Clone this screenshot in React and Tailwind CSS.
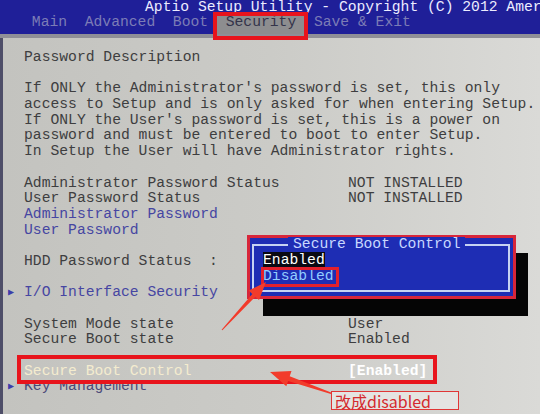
import React from 'react';

const rows = [
  { text: 'Password Description' },
  {},
  { text: "If ONLY the Administrator's password is set, this only" },
  { text: 'access to Setup and is only asked for when entering Setup.' },
  { text: "If ONLY the User's password is set, this is a power on" },
  { text: 'password and must be entered to boot to enter Setup.' },
  { text: 'In Setup the User will have Administrator rights.' },
  {},
  { text: 'Administrator Password Status', value: 'NOT INSTALLED' },
  { text: 'User Password Status', value: 'NOT INSTALLED' },
  { text: 'Administrator Password', link: true },
  { text: 'User Password', link: true },
  {},
  { text: 'HDD Password Status  :' },
  {},
  { text: 'I/O Interface Security', link: true, sub: true },
  {},
  { text: 'System Mode state', value: 'User' },
  { text: 'Secure Boot state', value: 'Enabled' },
  {},
  { text: 'Secure Boot Control', value: '[Enabled]', active: true },
  { text: 'Key Management', link: true, sub: true, dim: true },
];

function Row({ row }) {
  let color = 'text-[#3e3e40]';
  if (row.link) color = 'text-[#4646a2]';
  if (row.dim) color = 'text-[#4a4a78]';
  if (row.active) color = 'text-[#f4eccf]';

  return (
    <div className="flex h-[15.7px] leading-[15.7px] whitespace-pre">
      <span className="w-[21px] shrink-0 pl-[5px] text-[10px] text-[#3c3caa]">{row.sub ? '▶' : ''}</span>
      <span className={`w-[324px] shrink-0 ${color}`}>{row.text || ''}</span>
      {row.value && (
        <span className={row.active ? 'font-bold text-white' : 'text-[#3e3e40]'}>{row.value}</span>
      )}
    </div>
  );
}

function Arrows() {
  return (
    <svg className="absolute inset-0 pointer-events-none" width="540" height="414" viewBox="0 0 540 414">
      <polygon
        fill="#f23b2b"
        points="221.6,329.7 252.3,294.0 248.6,290.6 266,282 259.0,300.0 255.3,296.7 222.4,330.3"
      />
      <polygon
        fill="#f23b2b"
        points="335.8,395.6 288.1,381.0 286.3,386.2 270,372 291.5,371.0 289.7,376.2 336.2,394.4"
      />
    </svg>
  );
}

function Popup() {
  return (
    <div className="absolute left-[247px] top-[235px]">
      {/* drop shadow */}
      <div className="absolute left-[16px] top-[18px] w-[265px] h-[63px] bg-[#050505]" />
      <div className="relative w-[269px] h-[64px] bg-[#1e2db4] border-[3px] border-[#d8263a] pl-[2px] pr-[3px] pt-[6px] pb-[4px]">
        <div className="relative h-full border-2 border-[#c6d2f2] pl-[9px] pt-[6px] leading-[16px]">
          <span className="absolute left-[34px] top-[-9px] px-[5px] leading-[15px] bg-[#1e2db4] whitespace-pre text-[#c8d8ff]">
            Secure Boot Control
          </span>
          <div>
            <span className="bg-[#0a0a14] text-white">Enabled</span>
          </div>
          <div className="text-[#92ccff]">Disabled</div>
        </div>
      </div>
      {/* marker around the Disabled option */}
      <div className="absolute left-[14px] top-[32px] w-[78px] h-[20px] border-[3px] border-[#e3202c]" />
    </div>
  );
}

export default function App() {
  return (
    <div className="relative w-[540px] h-[414px] overflow-hidden bg-[#cbcbc7] font-['Liberation_Mono',monospace] text-[14.7px]">
      {/* Header */}
      <div className="h-[34px] bg-[#1f1f98]">
        <div className="h-[14px] leading-[15px] pl-[145px] whitespace-pre text-[#ececff]">
          Aptio Setup Utility - Copyright (C) 2012 American Megatrends, Inc.
        </div>
        <div className="h-[20px] leading-[16px] pl-[23px] whitespace-pre text-[#7c7cb6]">
          {' Main  Advanced  Boot '}
          <span className="inline-block h-[20px] align-top bg-[#8d8d8f] text-[#34344a]">{' Security '}</span>
          {' Save & Exit'}
        </div>
      </div>

      {/* Panel */}
      <div className="h-[4px] bg-[#8f8f97]" />
      <div className="h-[376px] border-l-[3px] border-[#4e4e68] bg-gradient-to-r from-[#c3c3bf] via-[#cbcbc7] to-[#dadad7] pt-[12px]">
        {rows.map((row, i) => (
          <Row key={i} row={row} />
        ))}
      </div>

      {/* Security tab marker */}
      <div className="absolute left-[213px] top-[12px] w-[95px] h-[28px] border-4 border-[#e8141c]" />

      <Popup />

      {/* Secure Boot Control row marker */}
      <div className="absolute left-[17px] top-[355px] w-[420px] h-[29px] border-4 border-[#e8141c]" />

      <Arrows />

      {/* Note */}
      <div className="absolute left-[331px] top-[391px] w-[128px] h-[19px] border border-[#e03636] bg-[#e4e4e2] pl-[3px] leading-[18px] text-[16px] text-[#d42a2e] font-['Noto_Sans_CJK_SC','Noto_Sans',sans-serif] whitespace-pre">
        改成disabled
      </div>
    </div>
  );
}
